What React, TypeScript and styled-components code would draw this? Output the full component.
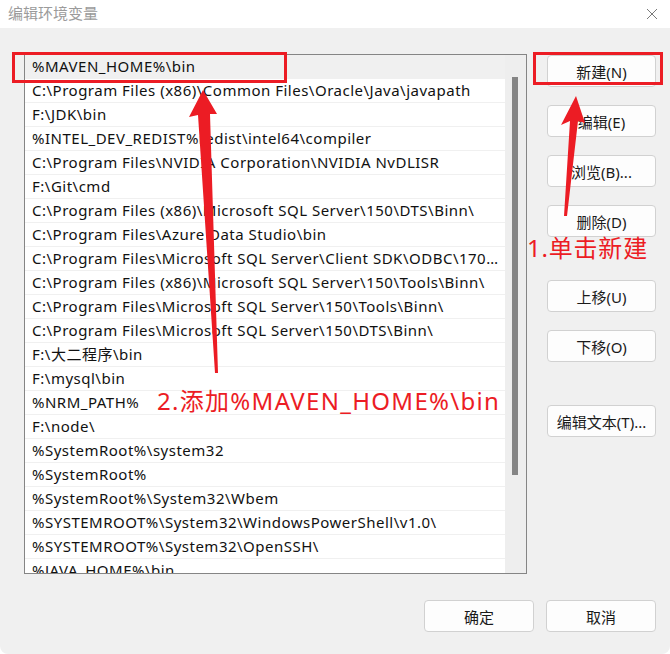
import React from 'react';
import styled, { createGlobalStyle } from 'styled-components';

const GlobalStyle = createGlobalStyle`
  * { box-sizing: border-box; }
  body {
    margin: 0;
    background: #ffffff;
    font-family: "Noto Sans", "Noto Sans CJK SC", sans-serif;
  }
`;

const RED = '#ec1c24';

const Window = styled.div`
  position: relative;
  width: 670px;
  height: 654px;
  background: #f0f0f0;
  border-radius: 0 0 8px 8px;
  overflow: hidden;
  display: flex;
  flex-direction: column;
`;

const TitleBar = styled.div`
  height: 28px;
  background: #ffffff;
  display: flex;
  align-items: center;
  justify-content: space-between;
  padding: 0 12px 0 8px;
`;

const Title = styled.span`
  font-size: 15px;
  color: #9b9b9b;
  line-height: 1;
  margin-top: -2px;
`;

const Main = styled.div`
  display: flex;
  gap: 20px;
  padding: 26px 14px 0 24px;
`;

const ListBox = styled.div`
  width: 503px;
  height: 520px;
  border: 1px solid #858585;
  background: #ffffff;
  display: flex;
`;

const Rows = styled.div`
  flex: 1;
  min-width: 0;
  overflow: hidden;
`;

const Row = styled.div<{ $selected?: boolean }>`
  height: 24px;
  line-height: 23px;
  padding: 0 6px 0 7px;
  border-bottom: 1px solid #f0f0f0;
  background: ${p => (p.$selected ? '#f0f0f0' : '#ffffff')};
  color: #111111;
  font-size: 15px;
  letter-spacing: 0.5px;
  white-space: nowrap;
  overflow: hidden;
  text-overflow: ellipsis;
`;

const ScrollTrack = styled.div`
  width: 21px;
  background: #eeeeee;
  padding: 22px 0 0 7px;
`;

const ScrollThumb = styled.div`
  width: 6px;
  height: 398px;
  background: #858585;
`;

const ButtonColumn = styled.div`
  display: flex;
  flex-direction: column;
  width: 109px;
  padding-top: 1px;
`;

const Button = styled.button<{ $gap?: number; $wide?: boolean }>`
  height: 32px;
  width: ${p => (p.$wide ? '110px' : '100%')};
  margin-top: ${p => p.$gap ?? 0}px;
  border: 1px solid #d1d1d1;
  border-radius: 4px;
  background: #fdfdfd;
  color: #1a1a1a;
  font-family: "Noto Sans", "Noto Sans CJK SC", sans-serif;
  font-size: 15px;
  padding: 0;
`;

const Footer = styled.div`
  display: flex;
  justify-content: flex-end;
  gap: 12px;
  padding: 26px 14px 0 0;
`;

const Highlight = styled.div<{ $x: number; $y: number; $w: number; $h: number }>`
  position: absolute;
  left: ${p => p.$x}px;
  top: ${p => p.$y}px;
  width: ${p => p.$w}px;
  height: ${p => p.$h}px;
  border: 3px solid ${RED};
  pointer-events: none;
`;

const Note = styled.div<{ $x: number; $y: number; $spacing?: number }>`
  position: absolute;
  left: ${p => p.$x}px;
  top: ${p => p.$y}px;
  color: ${RED};
  font-family: "Noto Sans", "Noto Sans CJK SC", sans-serif;
  font-size: 24px;
  letter-spacing: ${p => p.$spacing ?? 0}px;
  line-height: 1;
  white-space: nowrap;
  pointer-events: none;
`;

const ArrowLayer = styled.svg`
  position: absolute;
  left: 0;
  top: 0;
  pointer-events: none;
`;

const paths = [
  '%MAVEN_HOME%\\bin',
  'C:\\Program Files (x86)\\Common Files\\Oracle\\Java\\javapath',
  'F:\\JDK\\bin',
  '%INTEL_DEV_REDIST%redist\\intel64\\compiler',
  'C:\\Program Files\\NVIDIA Corporation\\NVIDIA NvDLISR',
  'F:\\Git\\cmd',
  'C:\\Program Files (x86)\\Microsoft SQL Server\\150\\DTS\\Binn\\',
  'C:\\Program Files\\Azure Data Studio\\bin',
  'C:\\Program Files\\Microsoft SQL Server\\Client SDK\\ODBC\\170\\Tools\\Binn\\',
  'C:\\Program Files (x86)\\Microsoft SQL Server\\150\\Tools\\Binn\\',
  'C:\\Program Files\\Microsoft SQL Server\\150\\Tools\\Binn\\',
  'C:\\Program Files\\Microsoft SQL Server\\150\\DTS\\Binn\\',
  'F:\\大二程序\\bin',
  'F:\\mysql\\bin',
  '%NRM_PATH%',
  'F:\\node\\',
  '%SystemRoot%\\system32',
  '%SystemRoot%',
  '%SystemRoot%\\System32\\Wbem',
  '%SYSTEMROOT%\\System32\\WindowsPowerShell\\v1.0\\',
  '%SYSTEMROOT%\\System32\\OpenSSH\\',
  '%JAVA_HOME%\\bin',
];

const sideButtons = [
  { label: '新建(N)', gap: 0 },
  { label: '编辑(E)', gap: 18 },
  { label: '浏览(B)...', gap: 18 },
  { label: '删除(D)', gap: 18 },
  { label: '上移(U)', gap: 43 },
  { label: '下移(O)', gap: 18 },
  { label: '编辑文本(T)...', gap: 43 },
];

const App: React.FC = () => {
  return (
    <>
      <GlobalStyle />
      <Window>
        <TitleBar>
          <Title>编辑环境变量</Title>
          <svg width="12" height="12" viewBox="0 0 12 12">
            <path d="M1 1 L11 11 M11 1 L1 11" stroke="#7a7a7a" strokeWidth="1" fill="none" />
          </svg>
        </TitleBar>

        <Main>
          <ListBox>
            <Rows>
              {paths.map((p, i) => (
                <Row key={i} $selected={i === 0}>{p}</Row>
              ))}
            </Rows>
            <ScrollTrack>
              <ScrollThumb />
            </ScrollTrack>
          </ListBox>

          <ButtonColumn>
            {sideButtons.map(b => (
              <Button key={b.label} $gap={b.gap}>{b.label}</Button>
            ))}
          </ButtonColumn>
        </Main>

        <Footer>
          <Button $wide>确定</Button>
          <Button $wide>取消</Button>
        </Footer>

        {/* annotations drawn over the dialog */}
        <Highlight $x={12} $y={52} $w={275} $h={31} />
        <Highlight $x={533} $y={52} $w={130} $h={33} />
        <ArrowLayer width="670" height="654">
          <polygon
            fill={RED}
            points="576,96 585,123 578,121 567,216 564,216 570,121 561,125"
          />
          <polygon
            fill={RED}
            points="203,90 217,114 210,114 218,373 215,373 198,115 189,117"
          />
        </ArrowLayer>
        <Note $x={527} $y={236} $spacing={0.8}>1.单击新建</Note>
        <Note $x={157} $y={389} $spacing={1.3}>2.添加%MAVEN_HOME%\bin</Note>
      </Window>
    </>
  );
};

export default App;
